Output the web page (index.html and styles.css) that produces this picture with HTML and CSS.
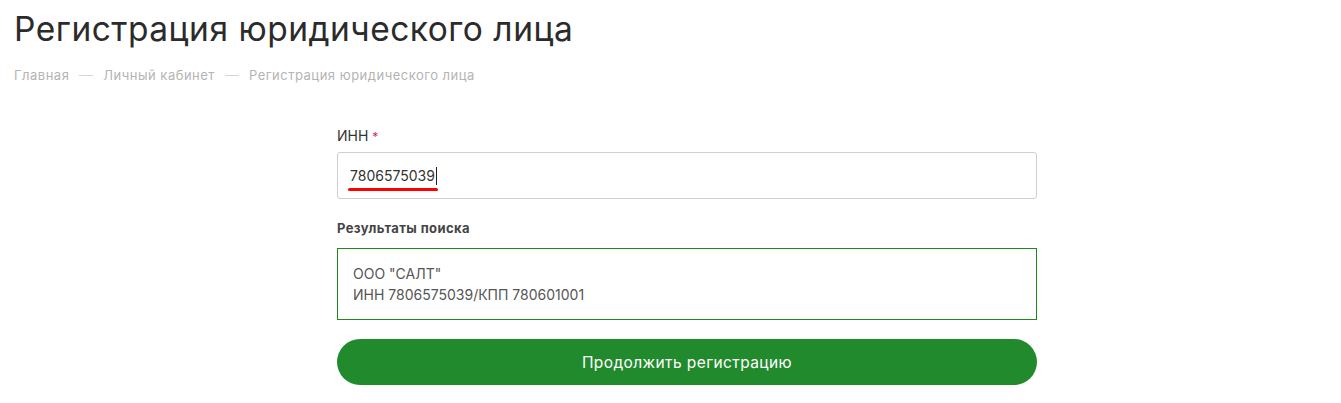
FILE: index.html
```html
<!DOCTYPE html>
<html lang="ru">
<head>
<meta charset="utf-8">
<link rel="stylesheet" href="styles.css">
</head>
<body>
<div class="page">
  <h1 class="title">Регистрация юридического лица</h1>
  <nav class="crumbs">
    <span>Главная</span><span class="dash"></span><span>Личный кабинет</span><span class="dash"></span><span>Регистрация юридического лица</span>
  </nav>
  <div class="form">
    <label class="label">ИНН <span class="req">*</span></label>
    <div class="input">
      <span class="value">7806575039</span><span class="caret"></span>
    </div>
    <div class="subtitle">Результаты поиска</div>
    <div class="result">
      <div>ООО "САЛТ"</div>
      <div>ИНН 7806575039/КПП 780601001</div>
    </div>
    <button class="btn">Продолжить регистрацию</button>
  </div>
</div>
</body>
</html>
```
FILE: styles.css
```css
* { box-sizing: border-box; }
html, body { margin: 0; background: #fff; }
body { font-family: "Inter", "Liberation Sans", sans-serif; color: #333; }
.page { padding: 9px 0 0 14px; }
.title { margin: 0; font-size: 33.5px; font-weight: 400; line-height: 40px; color: #2b2b2b; letter-spacing: 0.5px; }
.crumbs { margin-top: 18px; display: flex; align-items: center; font-size: 13px; color: #b4b4b4; line-height: 16px; letter-spacing: 0.5px; }
.dash { display: inline-block; width: 14px; height: 1px; background: #d6d6d6; margin: 0 10px; }
.form { width: 700px; margin: 44px 0 0 323px; display: flex; flex-direction: column; }
.label { font-size: 14px; color: #333; line-height: 18px; }
.req { color: #e0245e; font-size: 12px; }
.input { margin-top: 6px; height: 47px; border: 1px solid #cfcfcf; border-radius: 3px; display: flex; align-items: center; padding-left: 12px; }
.value { font-size: 14px; color: #333; position: relative; }
.value::after { content: ""; position: absolute; left: -2px; right: -3px; bottom: -7px; height: 3px; border-radius: 2px; background: #f00; }
.caret { display: inline-block; width: 1px; height: 18px; background: #222; margin-left: 1px; }
.subtitle { margin-top: 20px; font-size: 13px; font-weight: 700; color: #444; line-height: 18px; letter-spacing: 0.4px; }
.result { margin-top: 11px; height: 72px; border: 1px solid #1e8a1e; padding: 14px 15px 0; font-size: 14px; color: #555; line-height: 21px; }
.btn { margin-top: 19px; height: 46px; border: 0; border-radius: 23px; background: #218a2c; color: #fff; font-family: "Inter", "Liberation Sans", sans-serif; font-size: 15.5px; letter-spacing: 0.4px; cursor: pointer; }
```
